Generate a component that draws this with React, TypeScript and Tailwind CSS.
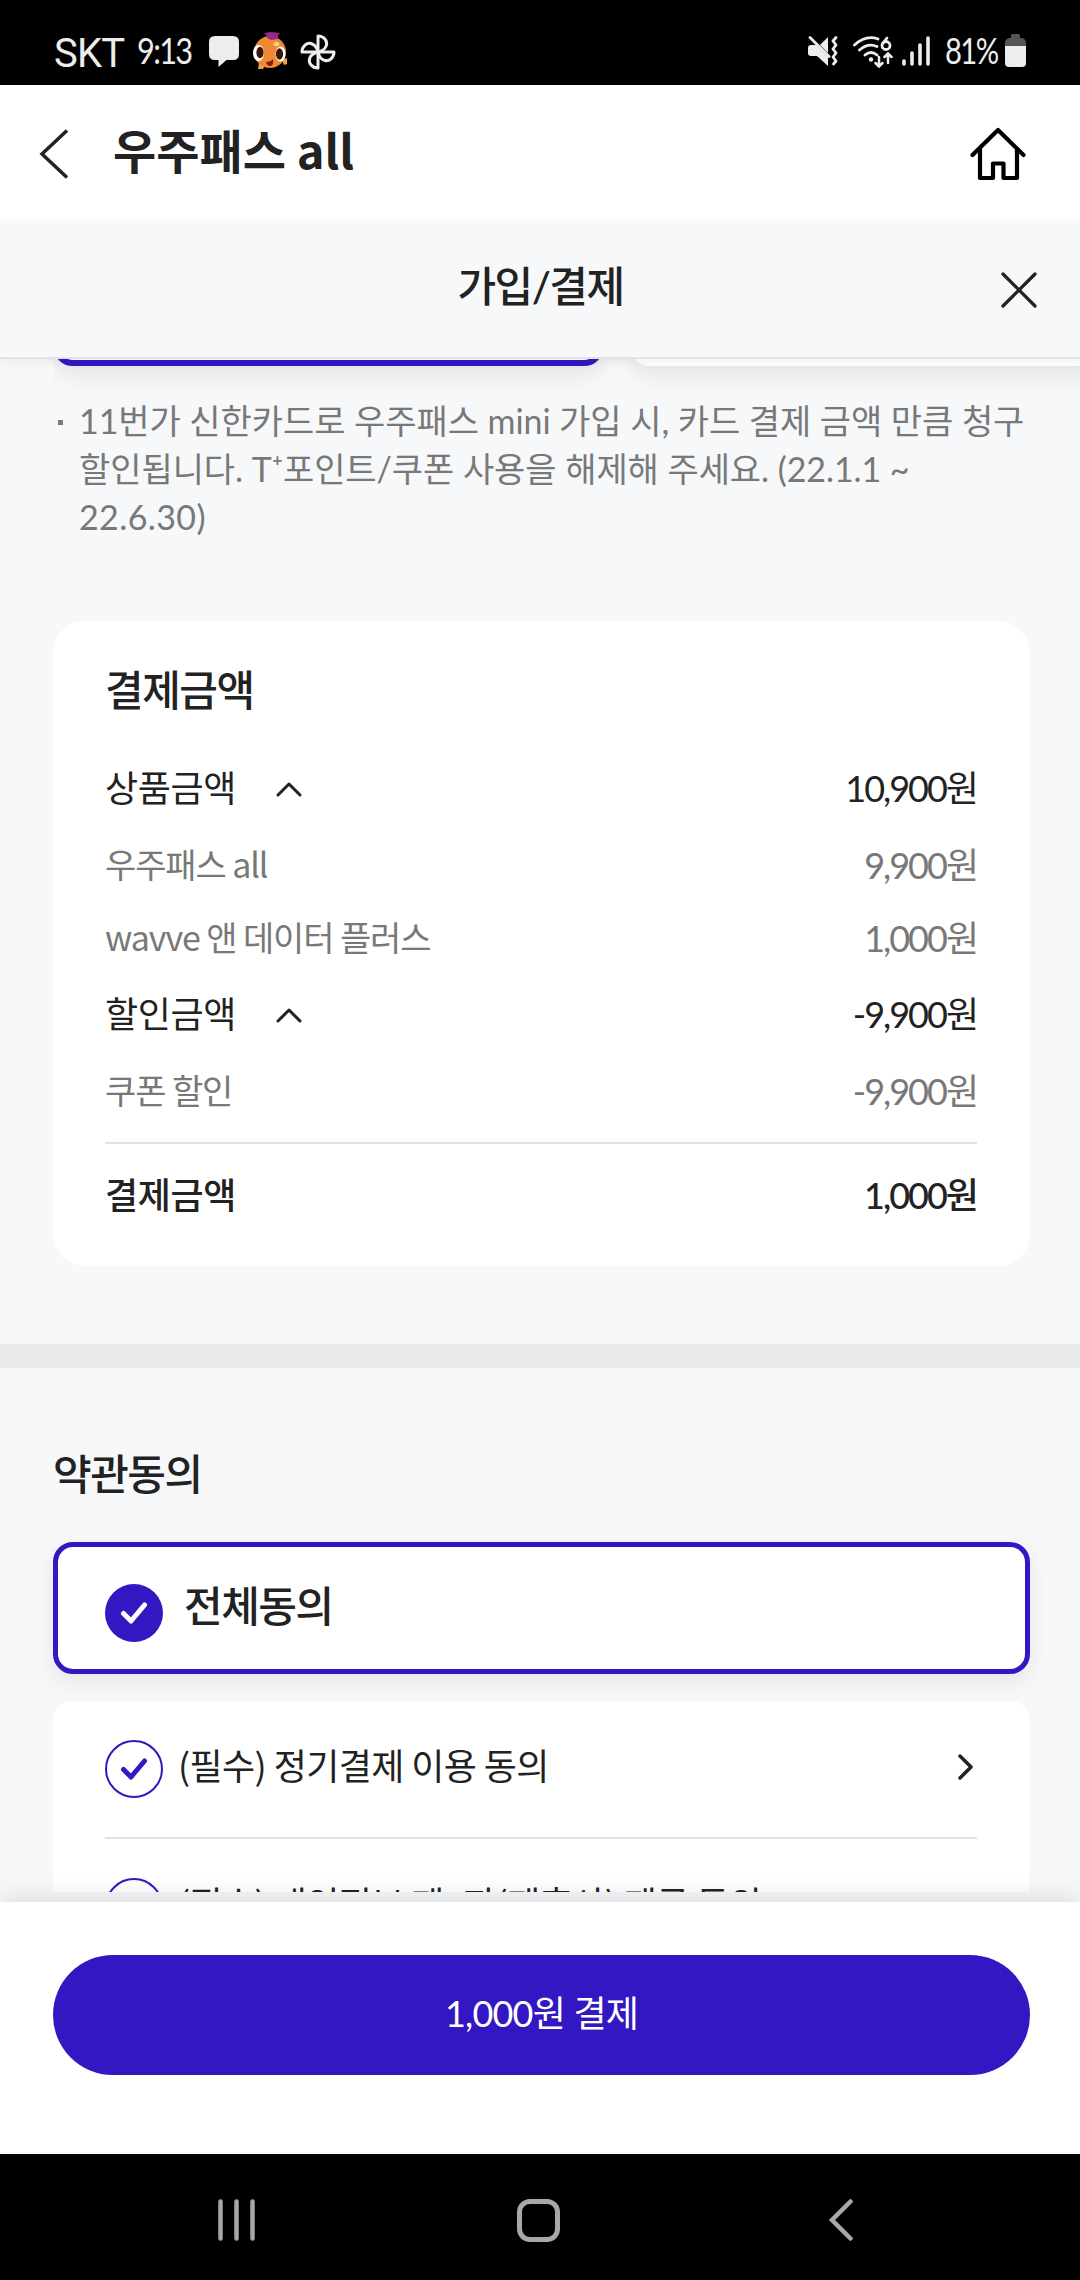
import type { ReactNode } from "react";
import clsx from "clsx";

const StatusBar = () => (
	<div className="h-[85px] shrink-0 bg-black flex items-center justify-between pl-[54px] pr-[54px] text-[#ededed]">
		<div className="flex items-center h-full">
			<span className="w-[83px] pt-[22px] font-['Roboto'] text-[40px] leading-none tracking-[-0.8px]">
				SKT
			</span>
			<span className="w-[72px] pt-[13px] font-['Lato'] text-[37px] leading-none tracking-[-2px] origin-left scale-x-[0.83]">
				9:13
			</span>
			<svg className="w-[30px] h-[31px] mt-[18px]" viewBox="0 0 30 31" fill="currentColor">
				<path d="M6 0H24Q30 0 30 6V18Q30 24 24 24H17.5L9.5 31V24H6Q0 24 0 18V6Q0 0 6 0Z" />
			</svg>
			<FishIcon />
			<svg
				className="w-[36px] h-[36px] mt-[18px] ml-[11px]"
				viewBox="0 0 36 36"
				fill="none"
				stroke="currentColor"
				strokeWidth="3"
				strokeLinejoin="round"
			>
				<path d="M18 18V2C24 2 27.500 7 26.500 11C25.500 15 22.500 17 18 18Z" />
				<path d="M18 18H34C34 24 29 27.500 25 26.500C21 25.500 19 22.500 18 18Z" />
				<path d="M18 18V34C12 34 8.500 29 9.500 25C10.500 21 13.500 19 18 18Z" />
				<path d="M18 18H2C2 12 7 8.500 11 9.500C15 10.500 17 13.500 18 18Z" />
			</svg>
		</div>
		<div className="flex items-center h-full">
			<svg className="w-[30px] h-[30px] mt-4" viewBox="0 0 30 30">
				<path
					d="M20 1V17L12 9ZM0 12Q0 9 3 9H8L20 21V30L9 20H3Q0 20 0 17Z"
					fill="currentColor"
				/>
				<path d="M2 1.500L21 20.500" stroke="currentColor" strokeWidth="2.800" strokeLinecap="round" />
				<path
					d="M28 1.500L25 5L28 9L25 13L28 17L25 21L28 25L25.500 28"
					fill="none"
					stroke="currentColor"
					strokeWidth="2.800"
					strokeLinecap="round"
					strokeLinejoin="round"
				/>
			</svg>
			<WifiIcon />
			<svg
				className="w-[28px] h-[30px] mt-4 ml-[9px]"
				viewBox="0 0 28 30"
				stroke="currentColor"
				strokeWidth="3.600"
				strokeLinecap="round"
			>
				<path d="M2 25V28M10 17V28M18 9V28M26 2V28" />
			</svg>
			<span className="w-[60px] ml-[15px] pt-[13px] font-['Lato'] text-[37px] leading-none tracking-[-2px] origin-left scale-x-[0.79]">
				81%
			</span>
			<svg className="w-[21px] h-[33px] mt-4" viewBox="0 0 21 33">
				<path d="M7 0H14Q15 0 15 2V4H17Q21 5 21 9V14H0V9Q0 5 4 4H6V2Q6 0 7 0Z" fill="#555" />
				<path d="M0 12H21V29Q21 33 17 33H4Q0 33 0 29Z" fill="currentColor" />
			</svg>
		</div>
	</div>
);

const FishIcon = () => (
	<svg className="w-[36px] h-[38px] mt-[16px] ml-[14px]" viewBox="0 0 36 38">
		<path d="M6 31L5 37H10L12 33ZM29 28L34 26V32L31 33Z" fill="#f2a047" />
		<circle cx="17" cy="20" r="16" fill="#ee8a35" />
		<path d="M11 1L18 0L27 1L25 3V7L18 8L14 6V4Z" fill="#972a86" />
		<ellipse cx="23.500" cy="12" rx="3" ry="2" fill="#ffd08a" />
		<ellipse cx="5.500" cy="21" rx="5.500" ry="8" fill="#fff" />
		<ellipse cx="27.500" cy="22" rx="5" ry="7.500" fill="#fff" />
		<ellipse cx="7" cy="20.500" rx="3.600" ry="5.800" fill="#3a1508" />
		<ellipse cx="26.500" cy="22" rx="3.600" ry="5.800" fill="#3a1508" />
		<path d="M13 30Q18 30 20 27Q21 33 17.500 34Q14 34 13 30Z" fill="#8c1712" />
	</svg>
);

const WifiIcon = () => (
	<svg
		className="w-[40px] h-[32px] mt-[18px] ml-[15px]"
		viewBox="0 0 40 32"
		fill="none"
		stroke="currentColor"
		strokeWidth="2.800"
		strokeLinecap="round"
	>
		<path d="M1.500 9Q13 -1.500 25 3M6.500 14Q15 6.500 24 10.500M12 19Q18 14 24 19" />
		<circle cx="18" cy="23.500" r="2.200" fill="currentColor" stroke="none" />
		<path d="M34 2L30 7" />
		<circle cx="33" cy="9.500" r="4" />
		<path d="M26 21V30M22.500 27L26 30.500L29.500 27M35 27V18M31.500 21L35 17.500L38.500 21" strokeWidth="2.500" />
	</svg>
);

const CheckMark = ({ filled }: { filled?: boolean }) => (
	<span
		className={clsx(
			"w-[58px] h-[58px] shrink-0 rounded-full flex items-center justify-center",
			filled ? "bg-[#3217c2] text-white" : "border-[2.5px] border-[#3217c2] text-[#3217c2]",
		)}
	>
		<svg
			className="w-[28px] h-[24px]"
			viewBox="0 0 28 24"
			fill="none"
			stroke="currentColor"
			strokeWidth="5"
			strokeLinecap="round"
			strokeLinejoin="round"
		>
			<path d="M3.500 12.500L11 20L24.500 4" />
		</svg>
	</span>
);

type PriceRow = {
	label: string;
	amount: string;
	gap: string;
	sub?: boolean;
};

const priceRows: PriceRow[] = [
	{ label: "상품금액", amount: "10,900원", gap: "mt-[44px]" },
	{ label: "우주패스 all", amount: "9,900원", gap: "mt-[27px]", sub: true },
	{ label: "wavve 앤 데이터 플러스", amount: "1,000원", gap: "mt-[23px]", sub: true },
	{ label: "할인금액", amount: "-9,900원", gap: "mt-[26px]" },
	{ label: "쿠폰 할인", amount: "-9,900원", gap: "mt-[27px]", sub: true },
];

const PriceLine = ({ label, amount, gap, sub }: PriceRow) => (
	<div
		className={clsx(
			"flex items-center justify-between h-[50px] leading-[50px]",
			gap,
			sub && "text-[#787878]",
		)}
	>
		<div className="flex items-center">
			<span
				className={
					sub
						? "text-[34px] tracking-[-1.1px] font-['Noto_Sans_CJK_KR',sans-serif]"
						: "pt-px text-[36px] tracking-[-0.4px]"
				}
			>
				{label}
			</span>
			{!sub && (
				<svg
					className="w-[26px] h-[16px] ml-[40px] mt-[4px]"
					viewBox="0 0 26 16"
					fill="none"
					stroke="currentColor"
					strokeWidth="3"
					strokeLinecap="round"
					strokeLinejoin="round"
				>
					<path d="M2 14L13 3L24 14" />
				</svg>
			)}
		</div>
		<span className="pt-px text-[36px] tracking-[-2px]">{amount}</span>
	</div>
);

const AgreeItem = ({ children }: { children: ReactNode }) => (
	<div className="flex items-center h-[136px]">
		<CheckMark />
		<span className="ml-[15px] grow text-[36px] leading-[50px] tracking-[-0.6px] -mt-[10px] font-['Noto_Sans_CJK_KR',sans-serif]">
			{children}
		</span>
		<svg
			className="w-[16px] h-[28px] mr-[3px] -mt-[4px]"
			viewBox="0 0 16 28"
			fill="none"
			stroke="currentColor"
			strokeWidth="3.500"
			strokeLinecap="round"
			strokeLinejoin="round"
		>
			<path d="M2 3L13 14L2 25" />
		</svg>
	</div>
);

export default function App() {
	return (
		<div className="w-[1080px] h-[2280px] flex flex-col overflow-hidden bg-[#f7f8fa] text-[#222] font-['Lato','Noto_Sans_CJK_KR',sans-serif]">
			<StatusBar />

			<header className="h-[137px] shrink-0 bg-white flex items-center pl-[39px] pr-[54px]">
				<svg
					className="w-[30px] h-[50px]"
					viewBox="0 0 30 50"
					fill="none"
					stroke="currentColor"
					strokeWidth="3.500"
				>
					<path d="M28 1.500L3 25L28 48.500" />
				</svg>
				<h1 className="ml-[44px] -mt-[10px] grow text-[47px] leading-[60px] font-bold font-['Noto_Sans_CJK_KR',sans-serif]">
					우주패스 all
				</h1>
				<svg
					className="w-[56px] h-[54px]"
					viewBox="0 0 56 54"
					fill="none"
					stroke="#000"
					strokeWidth="4.200"
					strokeLinecap="round"
					strokeLinejoin="round"
				>
					<path d="M2.500 28L28 3L53.500 28" />
					<path d="M10 22V51H23V36.500H33.500V51H47V22" />
				</svg>
			</header>

			<div className="relative z-10 h-[137px] shrink-0 bg-[#f7f8fa] border-b-2 border-[#e2e3e5] shadow-[0_3px_10px_rgba(0,0,0,0.06)] flex items-center pl-[80px] pr-[43px]">
				<h2 className="grow text-center text-[42px] leading-[60px] font-medium tracking-[-1.5px] -mt-[8px]">
					가입/결제
				</h2>
				<svg
					className="w-[36px] h-[36px]"
					viewBox="0 0 36 36"
					fill="none"
					stroke="currentColor"
					strokeWidth="3.300"
					strokeLinecap="round"
				>
					<path d="M2 2L34 34M34 2L2 34" />
				</svg>
			</div>

			<main className="h-[1533px] shrink-0 overflow-hidden">
				{/* lower edge of the card carousel */}
				<div className="h-[45px] ml-[53px] flex items-end gap-[26px] overflow-hidden pb-[38px]">
					<div className="w-[551px] h-[160px] shrink-0 rounded-[20px] border-[6px] border-[#3217c2] bg-white shadow-[0_10px_24px_rgba(0,0,0,0.08)]" />
					<div className="w-[551px] h-[160px] shrink-0 rounded-[20px] bg-white shadow-[0_10px_24px_rgba(0,0,0,0.08)]" />
				</div>

				<p className="flex mt-[-7px] ml-[58px] text-[34px] leading-[48px] tracking-[-0.07px] text-[#787878]">
					<span className="w-[5px] h-[5px] mt-[23px] mr-[16px] shrink-0 bg-[#787878]" />
					<span className="whitespace-nowrap">
						11번가 신한카드로 우주패스 mini 가입 시, 카드 결제 금액 만큼 청구
						<br />
						할인됩니다. T⁺포인트/쿠폰 사용을 해제해 주세요. (22.1.1 ~
						<br />
						<span className="tracking-[0.4px]">22.6.30)</span>
					</span>
				</p>

				<section className="mt-[80px] ml-[53px] w-[977px] h-[645px] rounded-[32px] bg-white pl-[52px] pr-[53px] pt-[37px]">
					<h3 className="pt-[2px] -mb-[2px] text-[42px] leading-[60px] font-medium tracking-[-1.5px]">
						결제금액
					</h3>
					{priceRows.map((row) => (
						<PriceLine key={row.label + row.amount} {...row} />
					))}
					<div className="mt-[27px] h-[2px] bg-[#e2e2e2]" />
					<div className="mt-[26px] flex justify-between text-[36px] leading-[50px] font-medium">
						<span className="tracking-[-0.4px]">결제금액</span>
						<span className="tracking-[-2px]">1,000원</span>
					</div>
				</section>

				<div className="mt-[78px] h-[24px] bg-[#e8e9eb]" />

				<section className="pl-[53px] pr-[50px]">
					<h3 className="mt-[76px] text-[42px] leading-[60px] font-medium tracking-[-1.5px]">
						약관동의
					</h3>
					<div className="mt-[38px] h-[132px] rounded-[20px] border-[5px] border-[#3217c2] bg-white shadow-[0_8px_24px_rgba(0,0,0,0.08)] flex items-center pl-[47px] pt-[10px]">
						<CheckMark filled />
						<span className="ml-[21px] -mt-[14px] text-[42px] leading-[60px] font-medium tracking-[-1.5px]">
							전체동의
						</span>
					</div>
					<div className="mt-[27px] rounded-[20px] bg-white pl-[52px] pr-[53px] h-[300px]">
						<AgreeItem>(필수) 정기결제 이용 동의</AgreeItem>
						<div className="h-[2px] bg-[#e2e2e2]" />
						<AgreeItem>(필수) 개인정보 제3자(제휴사) 제공 동의</AgreeItem>
					</div>
				</section>
			</main>

			<footer className="relative z-10 mt-[10px] h-[252px] shrink-0 bg-white pl-[53px] pr-[50px] pt-[53px] shadow-[0_-6px_24px_rgba(0,0,0,0.1)]">
				<button className="w-full h-[120px] rounded-full bg-[#3217c2] text-white text-[36px] tracking-[-0.8px] pb-[4px]">
					1,000원 결제
				</button>
			</footer>

			<nav className="relative z-10 h-[126px] shrink-0 bg-black text-[#a8a8a8] flex items-center pl-[218px]">
				<svg
					className="w-[38px] h-[42px] mt-[6px]"
					viewBox="0 0 38 42"
					stroke="currentColor"
					strokeWidth="4.500"
					strokeLinecap="round"
				>
					<path d="M2.500 2.500V39.500M18.500 2.500V39.500M34.500 2.500V39.500" />
				</svg>
				<span className="w-[43px] h-[43px] mt-[6px] ml-[261px] rounded-[13px] border-[5px] border-current" />
				<svg
					className="w-[26px] h-[42px] mt-[6px] ml-[268px]"
					viewBox="0 0 26 42"
					fill="none"
					stroke="currentColor"
					strokeWidth="4.500"
					strokeLinecap="round"
				>
					<path d="M22.500 2.500L4 21L22.500 39.500" />
				</svg>
			</nav>
		</div>
	);
}
